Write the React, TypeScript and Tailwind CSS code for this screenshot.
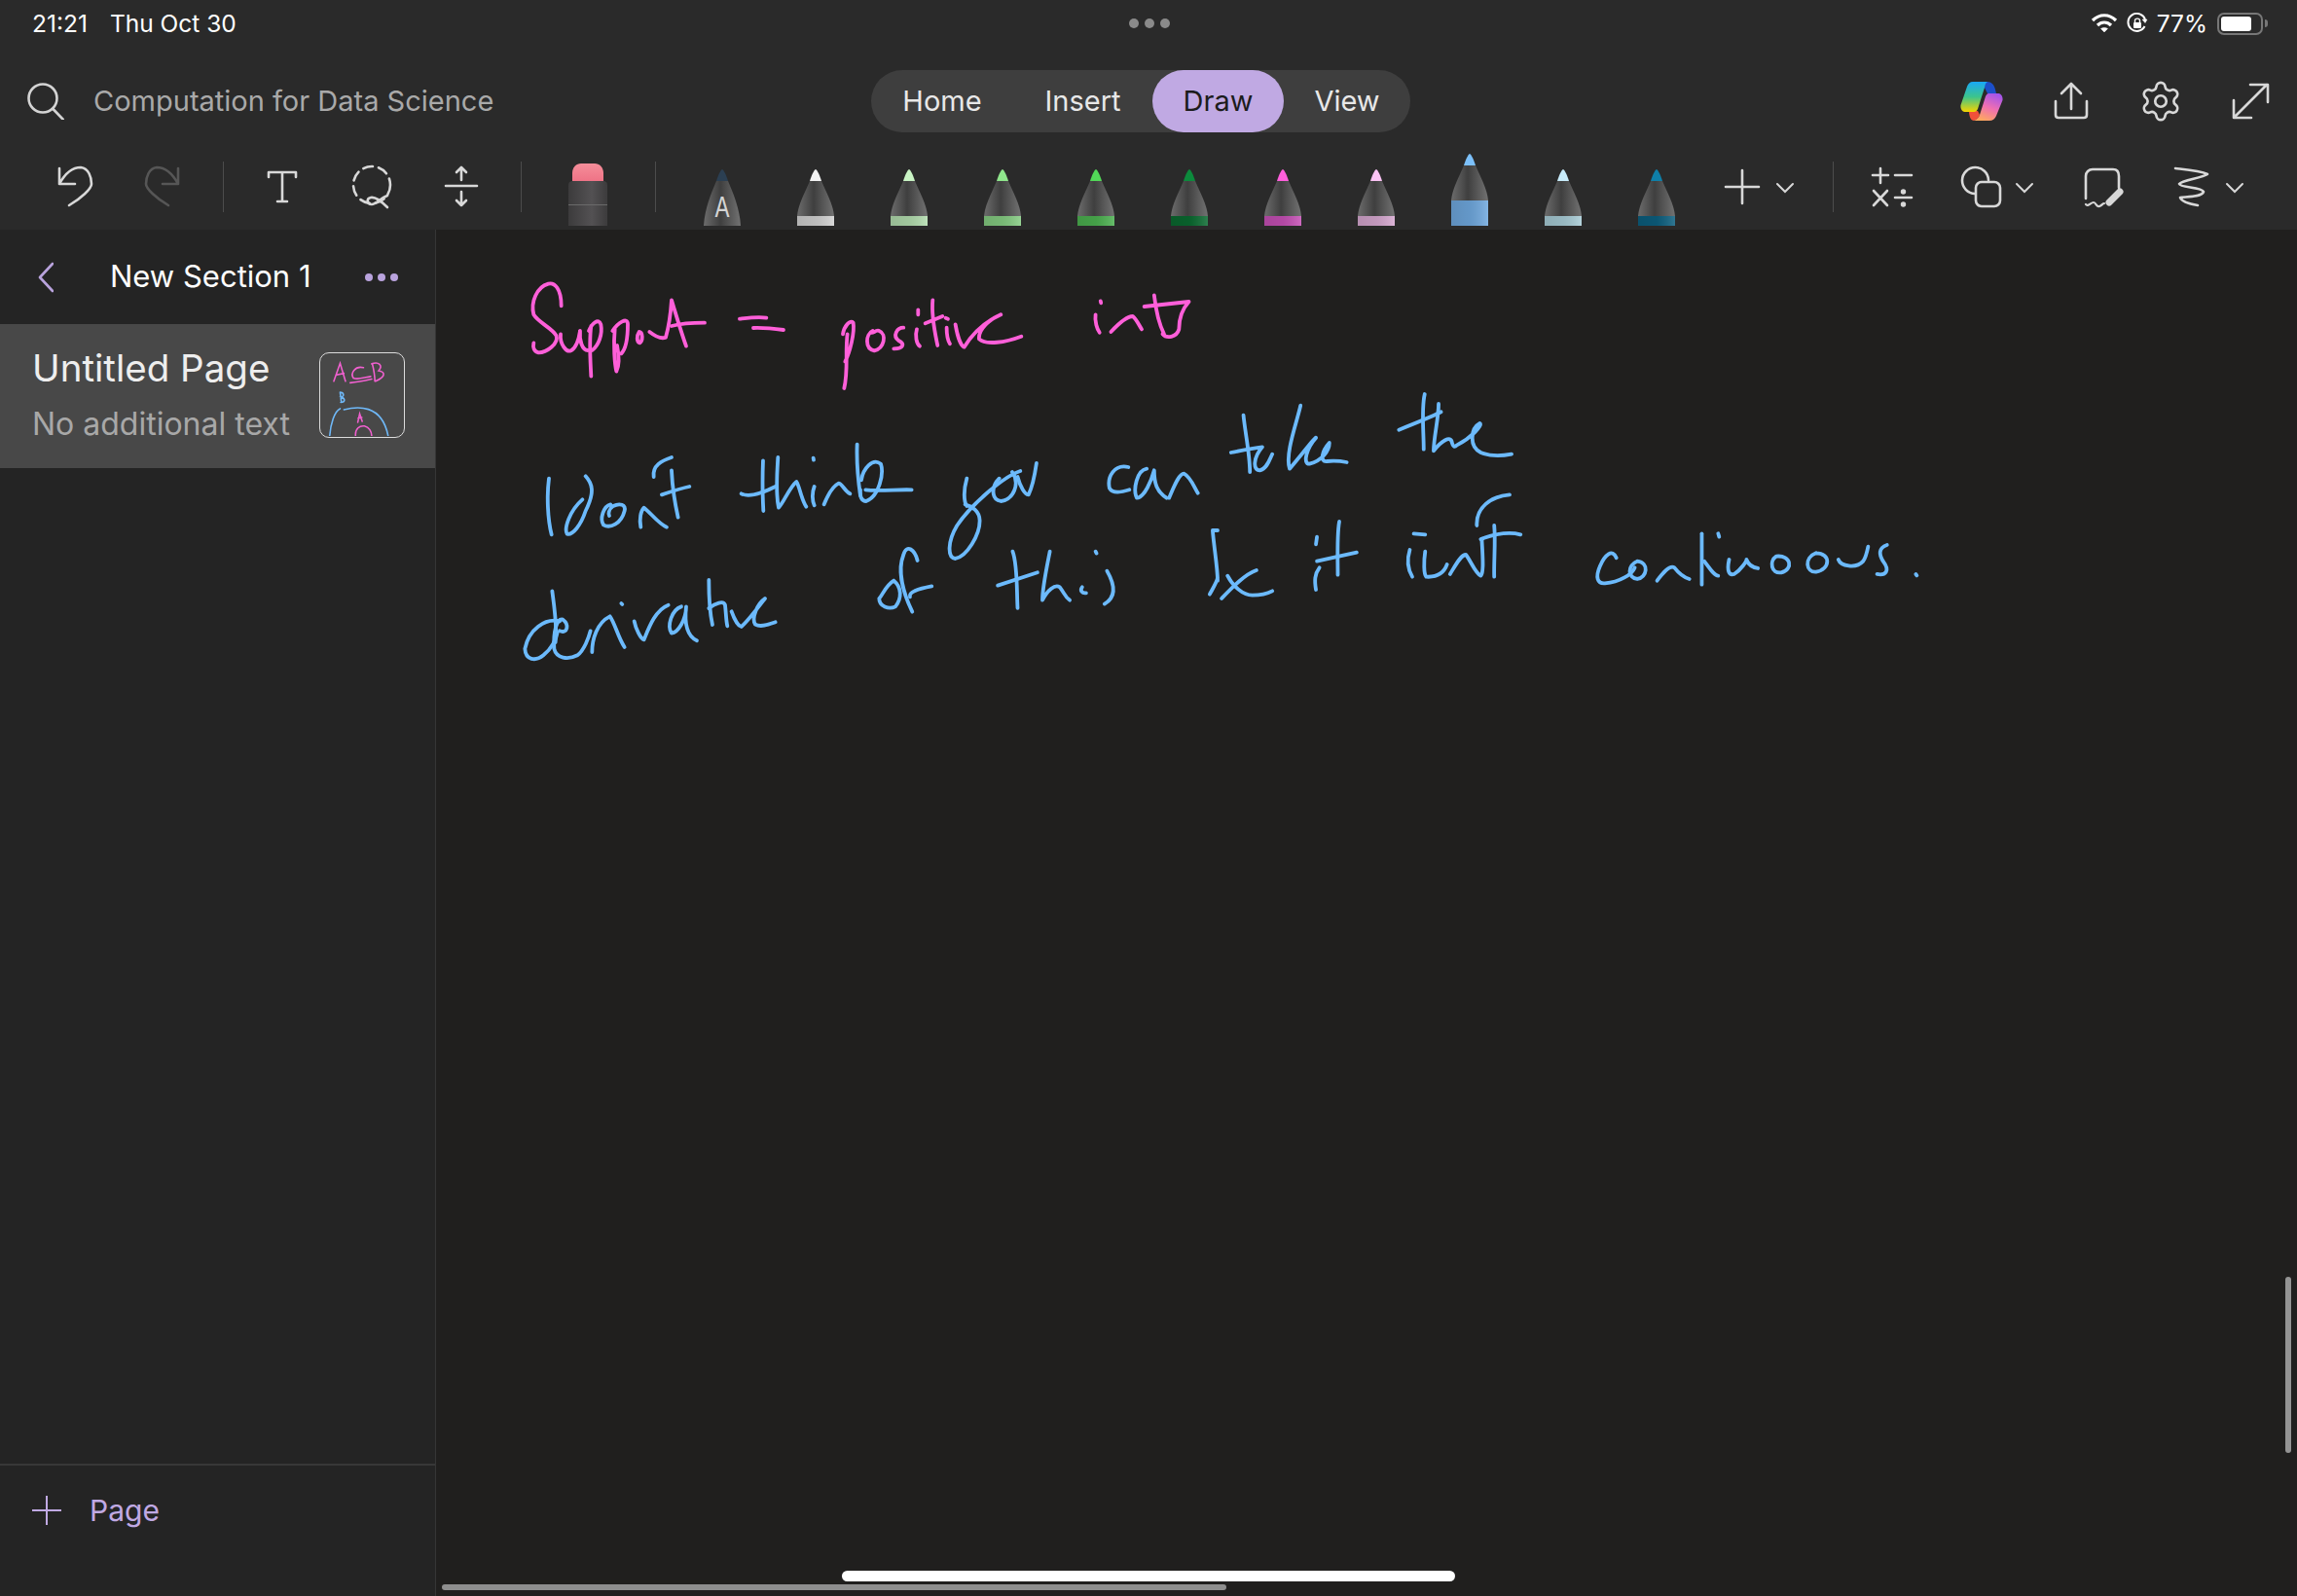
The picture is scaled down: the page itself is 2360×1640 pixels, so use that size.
import { Settings } from "lucide-react";

const pens = [
  { id: "a", tip: "#2b3f52", band: "", letter: true },
  { id: "b", tip: "#f2f2f2", band: "#d2d2d2" },
  { id: "c", tip: "#c9f4c4", band: "#b2dcae" },
  { id: "d", tip: "#8fe68c", band: "#85cc82" },
  { id: "e", tip: "#52d858", band: "#4cb150" },
  { id: "f", tip: "#0c8a3c", band: "#0a6a30" },
  { id: "g", tip: "#ff5fdc", band: "#c650b6" },
  { id: "h", tip: "#fbc3f5", band: "#d6a8d0" },
  { id: "i", tip: "#7cc0fa", band: "#6fa8de", selected: true },
  { id: "j", tip: "#c8ecfb", band: "#a8ccd6" },
  { id: "k", tip: "#0f7fa8", band: "#0c5f7f" },
];

// ink strokes are traced from crops, each list in its own crop coordinates
const pinkLine1 = [
  "M140 118C140 65 120 45 100 50C65 60 45 105 55 145C70 170 110 185 125 210C132 235 95 262 70 262C55 258 52 245 55 232",
  "M138 205C135 235 155 262 170 256C190 245 195 215 198 195C195 225 205 255 222 255",
  "M232 180C225 230 230 290 232 335M225 195C235 170 255 155 262 175C268 205 255 240 235 255",
  "M305 190C300 240 305 300 310 320C320 300 318 270 312 240M298 195C315 170 345 150 345 175C345 215 340 250 325 265",
  "M380 198C372 210 372 230 382 232C392 225 392 200 380 198",
  "M412 198C430 212 450 220 462 215C475 170 478 130 480 100C495 150 510 200 525 242",
  "M480 180C510 172 545 170 582 170",
  "M690 158C715 155 750 150 772 155",
  "M732 186C760 185 795 188 825 192",
  "M1008 205C1012 180 1030 160 1040 170C1045 200 1030 260 1015 290M1022 205C1015 260 1025 320 1012 372",
  "M1100 195C1078 205 1075 250 1105 256C1135 250 1145 205 1120 195C1110 190 1100 205 1095 200",
  "M1195 185C1175 185 1160 210 1180 225C1200 235 1195 250 1165 250",
  "M1240 130L1240 145M1236 190C1230 210 1235 235 1245 242",
  "M1285 100C1280 150 1292 200 1300 240M1262 172L1315 150",
  "M1325 155L1332 158M1328 185C1328 205 1332 225 1338 235",
  "M1355 175C1360 205 1370 240 1382 245C1410 200 1450 165 1495 145C1460 160 1425 190 1428 220C1450 240 1510 230 1558 212",
];

const pinkInts = [
  "M1197 148L1198 154M1187 190C1185 210 1190 235 1195 245",
  "M1218 243C1235 215 1250 195 1262 195C1270 205 1275 225 1280 235",
  "M1305 130C1308 170 1315 220 1325 250",
  "M1285 165L1375 150C1360 175 1355 210 1355 235C1350 260 1330 265 1322 250",
];

const blueLine2 = [
  "M72 125C65 180 68 250 80 298",
  "M185 118C205 140 215 165 185 225C170 270 145 300 128 296C118 280 135 225 175 190",
  "M262 205C240 210 228 250 240 268C260 280 295 265 305 225C310 205 290 200 270 210C255 220 255 235 258 240",
  "M355 275C350 250 355 225 365 215C385 230 410 265 435 275",
  "M450 60C420 70 390 85 395 120",
  "M450 100C452 150 460 200 470 245",
  "M420 175C450 165 480 155 505 150",
  "M732 70C730 120 730 170 733 225",
  "M665 172C690 185 730 170 770 150",
  "M778 60C775 110 770 170 780 215C795 200 815 150 835 135C845 150 850 190 865 212",
  "M887 62L888 68M890 150C882 170 884 195 890 208",
  "M920 205C930 180 945 150 965 140C975 140 985 165 1000 172",
  "M1022 20C1020 70 1025 130 1032 178",
  "M1035 130C1040 95 1070 60 1095 80C1105 110 1090 180 1050 195C1035 195 1030 180 1032 160",
  "M1048 160C1090 165 1150 158 1190 160",
  "M1525 102C1470 120 1370 210 1330 270C1300 320 1300 370 1325 372C1360 365 1400 300 1400 255C1400 225 1375 210 1355 205M1360 125C1350 160 1350 195 1360 210",
  "M1460 125C1435 150 1435 190 1465 195C1505 190 1525 140 1500 105",
];

const blueLine3 = [
  "M112 142C118 190 128 250 122 300",
  "M135 235C90 225 40 260 28 320C30 355 60 360 85 340C110 320 125 290 128 270",
  "M135 265C160 275 165 245 145 230C125 225 115 270 118 320C125 350 160 355 190 340C210 325 225 285 230 265",
  "M235 330C235 290 250 240 290 220C305 240 315 285 335 315",
  "M325 180L328 183",
  "M365 235C370 260 385 290 395 292C410 255 430 200 470 185",
  "M510 190C480 200 465 250 480 272C500 270 525 230 525 190C520 235 525 280 558 295",
  "M595 108C595 150 598 210 606 246",
  "M595 195C615 180 640 170 645 185C648 210 648 235 652 250",
  "M665 205C672 225 685 250 695 252C715 235 745 195 768 165C745 180 725 225 738 245C755 255 780 245 800 238",
  "M1165 110C1140 125 1130 155 1120 165C1120 190 1150 200 1170 190C1190 165 1190 130 1165 110",
  "M1238 48C1230 15 1205 -5 1195 30C1175 80 1195 150 1222 206",
  "M1215 160C1210 145 1240 135 1282 127",
];

const blueInkLeft = [
  "M1030 690C1035 720 1045 745 1052 745C1060 720 1065 680 1068 648",
  "M1253 660C1225 650 1210 690 1215 725C1220 740 1235 740 1255 730",
  "M1290 665C1270 670 1262 730 1270 755C1285 755 1300 700 1305 670C1305 710 1310 735 1330 755",
  "M1335 755C1345 720 1355 680 1365 680C1378 690 1385 720 1393 740",
  "M1020 920C1030 960 1028 1040 1030 1095",
  "M990 1025C1030 1005 1060 990 1070 985",
  "M1095 920C1090 960 1080 1030 1080 1070C1090 1040 1105 1020 1115 1030C1125 1050 1125 1060 1135 1070",
  "M1187 920L1189 926M1160 1030C1155 1040 1160 1050 1168 1048",
  "M1210 980C1225 1020 1230 1060 1205 1082",
];

const blueInkRight = [
  "M152 80C155 130 165 200 165 255",
  "M127 195C150 188 170 182 190 178C172 210 170 250 185 250C200 245 205 215 210 200",
  "M267 50C260 100 235 200 245 245C270 200 300 140 298 150C280 180 270 230 285 230C310 220 325 190 325 165C310 190 305 225 320 222C335 220 350 222 360 225",
  "M517 15C510 60 515 130 515 185",
  "M465 125C490 110 530 85 550 70",
  "M545 45C545 90 535 150 535 190C550 160 570 140 572 165C575 180 578 178 582 172C610 150 635 110 628 105C610 120 605 175 630 195C650 208 675 205 692 200",
  "M90 435L100 435M90 435C92 480 100 550 100 590M84 632C92 610 100 590 100 580",
  "M108 645C130 610 155 570 178 558",
  "M120 575C130 605 150 635 170 635C190 635 200 630 210 622",
  "M300 455L298 478M305 550C295 570 295 590 298 618",
  "M345 408C340 450 342 520 342 572",
  "M300 530L380 503",
  "M495 445L518 448M487 495C480 530 485 560 492 578",
  "M518 500C515 530 515 570 520 578C540 580 555 570 562 540",
  "M568 570C580 540 590 510 600 510C610 530 620 570 630 575C635 565 635 540 632 465",
  "M688 325C650 330 620 365 622 420",
  "M657 420C660 470 656 530 657 578",
  "M630 462C660 445 690 440 710 448",
  "M903 520C895 490 880 510 870 545C860 580 865 600 880 598C910 595 935 570 940 550",
  "M945 530C925 545 925 580 945 585C965 580 970 535 945 530",
  "M985 590C995 570 1010 540 1020 550C1030 570 1040 580 1050 585",
  "M1075 445L1075 602",
  "M1108 445L1110 455M1080 530C1090 550 1100 575 1108 575",
  "M1130 525C1125 560 1130 575 1140 570C1155 555 1165 530 1165 525C1170 545 1180 550 1188 552",
  "M1225 515C1210 530 1215 570 1235 565C1260 555 1255 510 1225 515",
  "M1305 505C1280 520 1285 565 1305 563C1335 555 1335 505 1305 505",
  "M1350 525C1355 545 1385 555 1400 530C1405 520 1408 500 1410 485",
  "M1448 480C1430 490 1432 510 1440 530C1455 560 1445 575 1428 570",
  "M1506 570L1508 574",
];

function Ink({ paths, transform, color }: { paths: string[]; transform: string; color: string }) {
  return (
    <g transform={transform} stroke={color} strokeWidth="3.8">
      {paths.map((d) => (
        <path key={d} d={d} vectorEffect="non-scaling-stroke" />
      ))}
    </g>
  );
}

function Chevron() {
  return (
    <svg width="24" height="52" viewBox="0 0 24 52" fill="none" stroke="#d8d8d8" strokeWidth="2" strokeLinecap="round" className="ml-[2px]">
      <path d="M4 23L12 31L20 23" />
    </svg>
  );
}

function ToolIcon({ children, className = "" }: { children: React.ReactNode; className?: string }) {
  return (
    <svg width="60" height="52" viewBox="0 0 60 52" fill="none" stroke="#d8d8d8" strokeWidth="2.6" strokeLinecap="round" strokeLinejoin="round" className={className}>
      {children}
    </svg>
  );
}

function Separator({ className = "" }: { className?: string }) {
  return <div className={`w-px h-[52px] bg-[#4c4c4c] ${className}`} />;
}

function Pen({ id, tip, band, letter, selected }: { id: string; tip: string; band: string; letter?: boolean; selected?: boolean }) {
  const h = selected ? 74 : 58;
  return (
    <svg width="40" height={h} viewBox={`0 0 40 ${h}`} className="shrink-0">
      <defs>
        <linearGradient id={`body-${id}`} x1="0" x2="1" y1="0" y2="0">
          <stop offset="0" stopColor="#6c6c6c" />
          <stop offset="0.45" stopColor="#3f3f3f" />
          <stop offset="1" stopColor="#727272" />
        </linearGradient>
        <linearGradient id={`shade-${id}`} x1="0" x2="1" y1="0" y2="0">
          <stop offset="0" stopColor="#000" stopOpacity="0.15" />
          <stop offset="0.5" stopColor="#000" stopOpacity="0.1" />
          <stop offset="1" stopColor="#fff" stopOpacity="0.15" />
        </linearGradient>
      </defs>
      <path d="M14 12C15.5 7 18 1 20 0C22 1 24.5 7 26 12Z" fill={tip} />
      {band ? (
        <>
          <path d="M14 12C9 24 2 36 1 48H39C38 36 31 24 26 12Z" fill={`url(#body-${id})`} />
          <rect x="1" y="48" width="38" height={h - 48} fill={band} />
          <rect x="1" y="48" width="38" height={h - 48} fill={`url(#shade-${id})`} />
        </>
      ) : (
        <path d={`M14 12C9 24 2 40 1 ${h}H39C38 40 31 24 26 12Z`} fill={`url(#body-${id})`} />
      )}
      {letter && (
        <text transform="translate(20 49) scale(0.8 1)" textAnchor="middle" fontFamily="Inter, sans-serif" fontSize="29" fill="#d4d4d4">
          A
        </text>
      )}
    </svg>
  );
}

function CopilotLogo() {
  return (
    <svg width="44" height="40" viewBox="0 0 44 40">
      <defs>
        <linearGradient id="cp-left" x1="0" x2="0" y1="0" y2="1">
          <stop offset="0" stopColor="#19a8f7" />
          <stop offset="0.5" stopColor="#3cc48c" />
          <stop offset="1" stopColor="#f5d400" />
        </linearGradient>
        <linearGradient id="cp-right" x1="0.7" x2="0.3" y1="0" y2="1">
          <stop offset="0" stopColor="#a455ea" />
          <stop offset="0.5" stopColor="#ef6fb2" />
          <stop offset="1" stopColor="#ffa95c" />
        </linearGradient>
      </defs>
      <path d="M24 0H28C32 0 35 3 36 8L37 12H28L25 6Z" fill="#1c4fc9" />
      <path d="M9 30H18L20 34C19 37 17 39 14 40C11 40 9 36 9 30Z" fill="#f0503a" />
      <path d="M13 0H28C26 1 25.5 3 25 6L18 28C17 30 16 31 14 31H6C2 31 0 28 0.5 24L7 5C8 2 10 0 13 0Z" fill="url(#cp-left)" />
      <path d="M29 12H39C42 12 44 15 43.5 19L37 35C36 38 33 40 30 40H14C17 39 19 37 20 34L26 15C27 13 28 12 29 12Z" fill="url(#cp-right)" />
    </svg>
  );
}

function HeaderIcon({ children, className = "" }: { children: React.ReactNode; className?: string }) {
  return (
    <svg width="40" height="40" viewBox="0 0 40 40" fill="none" stroke="#d8d8d8" strokeWidth="2.6" strokeLinecap="round" strokeLinejoin="round" className={className}>
      {children}
    </svg>
  );
}

export default function App() {
  return (
    <div className="relative w-[2360px] h-[1640px] overflow-hidden flex flex-col bg-[#201f1e] font-['Inter',sans-serif]">
      <header className="bg-[#2a2a2a] h-[236px] shrink-0">
        {/* status bar */}
        <div className="h-[48px] grid grid-cols-3 items-center pl-[33px] pr-[30px] text-white text-[24.5px]">
          <div className="flex gap-[23px]">
            <span>21:21</span>
            <span>Thu Oct 30</span>
          </div>
          <div className="flex justify-center gap-[6px]">
            <span className="w-[10px] h-[10px] rounded-full bg-[#8a8a8a]" />
            <span className="w-[10px] h-[10px] rounded-full bg-[#8a8a8a]" />
            <span className="w-[10px] h-[10px] rounded-full bg-[#8a8a8a]" />
          </div>
          <div className="flex items-center justify-end">
            <svg width="28" height="22" viewBox="0 0 28 22" fill="none" stroke="#fff" strokeWidth="3.2">
              <path d="M2 8C9 1 19 1 26 8" />
              <path d="M7 13C11 9 17 9 21 13" />
              <path d="M14 20L10.5 16.5C12.5 15 15.5 15 17.5 16.5Z" fill="#fff" strokeWidth="0.5" />
            </svg>
            <svg width="22" height="22" viewBox="0 0 22 22" fill="none" stroke="#fff" strokeWidth="2" className="ml-[9px]">
              <path d="M18.5 14A9 9 0 1 1 19 7" />
              <path d="M16 7H21L19 10.5Z" fill="#fff" strokeWidth="0.5" />
              <rect x="7" y="10" width="8" height="6" rx="1" fill="#fff" stroke="none" />
              <path d="M8.5 10V8C8.5 5.5 13.5 5.5 13.5 8V10" strokeWidth="1.4" />
            </svg>
            <span className="ml-[9px]">77%</span>
            <div className="ml-[10px] w-[47px] h-[23px] rounded-[7px] border-2 border-[#777] p-[2px] mr-[2px]">
              <div className="w-[31px] h-full rounded-[3px] bg-white" />
            </div>
            <div className="w-[3px] h-[8px] rounded-r-full bg-[#777]" />
          </div>
        </div>

        {/* title row */}
        <div className="relative mt-[24px] h-[64px] flex items-center justify-center">
          <div className="absolute left-[28px] flex items-center gap-[30px]">
            <svg width="38" height="38" viewBox="0 0 38 38" fill="none" stroke="#d4d4d4" strokeWidth="2.6" strokeLinecap="round">
              <circle cx="16" cy="16" r="14.5" />
              <path d="M26.5 27L37 38" />
            </svg>
            <span className="text-[29px] text-[#a9a9a9]">Computation for Data Science</span>
          </div>

          <div className="mr-[16px] w-[554px] h-[64px] rounded-full bg-[#3e3e3e] flex items-center text-[29px] text-[#e8e8e8]">
            <span className="w-[146px] text-center">Home</span>
            <span className="w-[143px] text-center">Insert</span>
            <span className="w-[135px] h-[64px] rounded-full bg-[#c0a9e3] text-[#1c1c1c] flex items-center justify-center">Draw</span>
            <span className="w-[130px] text-center">View</span>
          </div>

          <div className="absolute left-[2014px] flex items-center">
            <CopilotLogo />
            <HeaderIcon className="ml-[50px]">
              <path d="M4 20V34C4 36 5 37 7 37H33C35 37 36 36 36 34V20" />
              <path d="M20 2V28M10 12L20 2L30 12" />
            </HeaderIcon>
            <Settings size={46} strokeWidth={1.4} color="#d8d8d8" className="ml-[49px]" />
            <HeaderIcon className="ml-[49px]">
              <path d="M4 36L37 3M20 3H38V21M3 19V37H21" />
            </HeaderIcon>
          </div>
        </div>

        {/* tool row */}
        <div className="flex items-end h-[96px] pl-[47px]">
          <div className="flex items-center h-[52px] mb-[14px]">
            <ToolIcon>
              <path d="M14 7V23H30M14 23C20 12 28 6 36 6C44 7 47 16 47 23C47 28 36 38 24 45" />
            </ToolIcon>
            <ToolIcon className="ml-[30px] opacity-25">
              <path d="M46 7V23H30M46 23C40 12 32 6 24 6C16 7 13 16 13 23C13 28 24 38 36 45" />
            </ToolIcon>
            <Separator className="ml-[32px]" />
            <ToolIcon className="ml-[30px]">
              <path d="M16 16V11H44V16M30 11V41M25 41H35" />
            </ToolIcon>
            <ToolIcon className="ml-[32px]">
              <ellipse cx="30" cy="24" rx="19" ry="19" strokeDasharray="10 6" />
              <path d="M46 35C40 37 34 44 30 44C25 44 24 38 29 37C34 36 41 42 46 47" />
            </ToolIcon>
            <ToolIcon className="ml-[32px]">
              <path d="M14 25H46M30 6V19M25 11L30 6L35 11M30 31V45M25 40L30 45L35 40" />
            </ToolIcon>
            <Separator className="ml-[31px]" />
          </div>

          <svg width="40" height="64" viewBox="0 0 40 64" className="ml-[48px]">
            <defs>
              <linearGradient id="eraser-tip" x1="0" x2="0" y1="0" y2="1">
                <stop offset="0" stopColor="#f58e9a" />
                <stop offset="1" stopColor="#ee7084" />
              </linearGradient>
              <linearGradient id="eraser-body" x1="0" x2="1" y1="0" y2="0">
                <stop offset="0" stopColor="#3c3b3c" />
                <stop offset="0.6" stopColor="#535153" />
                <stop offset="1" stopColor="#3c3b3c" />
              </linearGradient>
            </defs>
            <path d="M4 20V10C4 4 8 0 13 0H27C32 0 36 4 36 10V20Z" fill="url(#eraser-tip)" />
            <path d="M0 22C0 19 2 18 4 18H36C38 18 40 19 40 22V64H0Z" fill="url(#eraser-body)" />
            <path d="M0 42.5H40" stroke="#6a6a6a" strokeWidth="1" />
          </svg>

          <Separator className="ml-[49px] mb-[14px]" />

          <div className="ml-[48px] flex items-end gap-[56px]">
            {pens.map((p) => (
              <Pen key={p.id} {...p} />
            ))}
          </div>

          <div className="flex items-center h-[52px] mb-[14px] ml-[38px]">
            <ToolIcon>
              <path d="M30 9V43M13 26H47" />
            </ToolIcon>
            <Chevron />
            <Separator className="ml-[37px]" />
            <ToolIcon className="ml-[30px]">
              <path d="M18 7V22M10 14H26M33 14H50M11 30L25 45M25 30L11 45M33 37H50" />
              <circle cx="41.5" cy="31" r="1.4" fill="#d8d8d8" />
              <circle cx="41.5" cy="44" r="1.4" fill="#d8d8d8" />
            </ToolIcon>
            <ToolIcon className="ml-[32px]">
              <path d="M23 33A13.5 13.5 0 1 1 37 19" />
              <rect x="24" y="21" width="25" height="25" rx="6" />
            </ToolIcon>
            <Chevron />
            <ToolIcon className="ml-[40px]">
              <path d="M11 38V15C11 11 14 8 18 8H39C43 8 45 11 45 15V27" />
              <path d="M46 31L35 42" strokeWidth="7" />
              <path d="M11 44C13 47 16 42 19 42C22 42 21 47 25 46C28 45 28 43 30 43" strokeWidth="2.2" />
            </ToolIcon>
            <ToolIcon className="ml-[30px]">
              <path d="M13 7C22 8 38 9 46 13C40 17 20 19 17 23C18 27 40 26 42 31C40 37 22 36 18 37C20 42 30 44 36 45" />
            </ToolIcon>
            <Chevron />
          </div>
        </div>
      </header>

      <main className="flex flex-1 min-h-0">
        <aside className="w-[448px] shrink-0 bg-[#242424] border-r border-[#363636] flex flex-col">
          <div className="h-[97px] shrink-0 flex items-center pl-[39px] pr-[38px]">
            <svg width="16" height="32" viewBox="0 0 16 32" fill="none" stroke="#b9a3dd" strokeWidth="2.6" strokeLinecap="round" strokeLinejoin="round">
              <path d="M15 2L2 16L15 30" />
            </svg>
            <span className="ml-[58px] text-[31px] text-white">New Section 1</span>
            <div className="ml-auto flex gap-[5px]">
              <span className="w-[8px] h-[8px] rounded-full bg-[#b9a3dd]" />
              <span className="w-[8px] h-[8px] rounded-full bg-[#b9a3dd]" />
              <span className="w-[8px] h-[8px] rounded-full bg-[#b9a3dd]" />
            </div>
          </div>

          <div className="h-[148px] shrink-0 bg-[#484848] flex items-start pl-[33px] pr-[31px]">
            <div className="flex flex-col pt-[20px]">
              <span className="text-[38.5px] leading-[50px] text-[#eeeeee]">Untitled Page</span>
              <span className="text-[32px] leading-[40px] mt-[13px] text-[#a8a8a8]">No additional text</span>
            </div>
            <div className="ml-auto mt-[29px] w-[88px] h-[88px] rounded-[10px] border-[1.5px] border-[#dcdcdc] overflow-hidden shrink-0">
              <svg width="85" height="85" viewBox="85 67 262 261" fill="none" strokeWidth="1.6" strokeLinecap="round">
                <g stroke="#f060cf">
                  <path d="M128 155L148 98L165 155M137 135L160 130" vectorEffect="non-scaling-stroke" />
                  <path d="M222 112C195 105 180 130 190 145C205 152 225 142 245 140M180 160C200 158 230 152 248 148" vectorEffect="non-scaling-stroke" />
                  <path d="M250 100C255 120 258 140 258 155M248 100C270 92 285 105 270 122C290 125 295 140 260 155" vectorEffect="non-scaling-stroke" />
                  <path d="M204 285L210 258L218 282M205 272L217 270M197 328C195 305 210 295 225 297C240 300 248 315 248 328" vectorEffect="non-scaling-stroke" />
                </g>
                <g stroke="#6fb8f7">
                  <path d="M148 190L152 222M148 190C160 190 162 203 152 205C165 210 165 222 150 222" vectorEffect="non-scaling-stroke" />
                  <path d="M148 242C130 250 118 290 115 328M160 245C200 235 280 225 300 328" vectorEffect="non-scaling-stroke" />
                </g>
              </svg>
            </div>
          </div>

          <div className="flex-1" />

          <div className="h-[136px] shrink-0 border-t-2 border-[#383838] flex items-start pt-[30px] pl-[32px] gap-[28px]">
            <svg width="32" height="32" viewBox="0 0 32 32" fill="none" stroke="#c0a9e3" strokeWidth="2">
              <path d="M16 1V31M1 16H31" />
            </svg>
            <span className="text-[30px] leading-[32px] text-[#c0a9e3]">Page</span>
          </div>
        </aside>

        <section className="relative flex-1 min-w-0">
          <svg className="absolute left-[-448px] top-[-236px]" width="2360" height="1640" fill="none" strokeLinecap="round" strokeLinejoin="round">
            <Ink paths={pinkLine1} transform="translate(530 275) scale(0.3333)" color="#ff5fd9" />
            <Ink paths={pinkInts} transform="translate(520 260) scale(0.5102 0.3333)" color="#ff5fd9" />
            <Ink paths={blueLine2} transform="translate(540 450) scale(0.3333)" color="#6cbafc" />
            <Ink paths={blueLine3} transform="translate(530 560) scale(0.3333)" color="#6cbafc" />
            <Ink paths={blueInkLeft} transform="translate(520 260) scale(0.5102 0.3333)" color="#6cbafc" />
            <Ink paths={blueInkRight} transform="translate(1200 400) scale(0.5102 0.3333)" color="#6cbafc" />
          </svg>

          <div className="absolute right-[6px] top-[1076px] w-[6px] h-[181px] rounded-full bg-[#949494]" />
          <div className="absolute left-[6px] bottom-[6px] w-[806px] h-[6px] rounded-full bg-[#8e8e8e]" />
        </section>
      </main>

      <div className="absolute left-[865px] top-[1614px] w-[630px] h-[11px] rounded-full bg-white" />
    </div>
  );
}
